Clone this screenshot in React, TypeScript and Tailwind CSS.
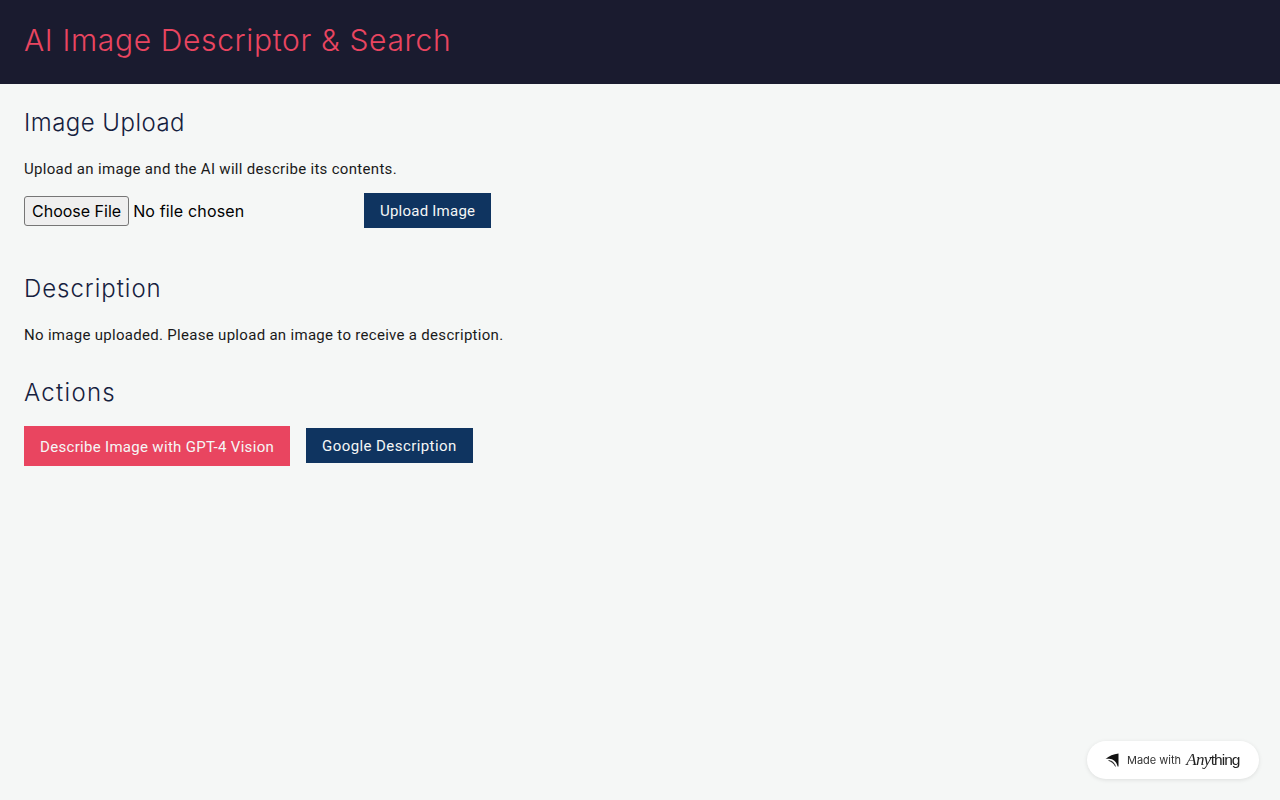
export default function App() {
  return (
    <div className="min-h-screen bg-[#f5f7f6] font-['Inter',sans-serif]">
      <header className="bg-[#1a1b2f] p-6">
        <h1 className="h-9 font-['Inter',sans-serif] text-3xl leading-[32px] font-light tracking-[0.65px] text-[#e94560]">AI Image Descriptor &amp; Search</h1>
      </header>
      <main className="p-6">
        <section className="mb-[46px]">
          <h2 className="mb-4 h-8 font-['Inter',sans-serif] text-2xl leading-[30px] font-light tracking-[0.47px] text-[#16213e]">Image Upload</h2>
          <p className="h-6 font-['Roboto',sans-serif] text-[15px] leading-[26px] tracking-[0.31px] text-[#1a1a1a]">Upload an image and the AI will describe its contents.</p>
          <div className="mt-[13px] flex items-center">
            <input type="file" className="mr-4 w-[324px] font-['Inter',sans-serif] text-base tracking-[0.15px] text-black file:mr-1 file:h-[30px] file:rounded-[3px] file:border file:border-solid file:border-[#767676] file:bg-[#efefef] file:px-[7px] file:text-base file:tracking-normal file:text-black" />
            <button className="h-[35px] bg-[#0f3460] px-4 pt-px font-['Roboto',sans-serif] text-[15px] tracking-[0.23px] text-[#f5f7f6]">Upload Image</button>
          </div>
        </section>
        <section className="mb-[30px]">
          <h2 className="mb-4 h-8 font-['Inter',sans-serif] text-2xl leading-[30px] font-light tracking-[0.97px] text-[#16213e]">Description</h2>
          <p className="h-6 font-['Roboto',sans-serif] text-[15px] leading-[26px] tracking-[0.3px] text-[#1a1a1a]">No image uploaded. Please upload an image to receive a description.</p>
        </section>
        <section>
          <h2 className="mb-[16px] h-[34px] font-['Inter',sans-serif] text-2xl leading-[34px] font-light tracking-[1.3px] text-[#16213e]">Actions</h2>
          <div className="flex items-start gap-4">
            <button className="h-10 bg-[#e94560] px-4 pt-[2px] font-['Roboto',sans-serif] text-[15px] tracking-[0.31px] text-[#f5f7f6]">Describe Image with GPT-4 Vision</button>
            <button className="mt-[2px] h-[35px] bg-[#0f3460] px-4 pt-px font-['Roboto',sans-serif] text-[15px] tracking-[0.42px] text-[#f5f7f6]">Google Description</button>
          </div>
        </section>
      </main>
      <div className="fixed right-[21px] bottom-[21px] flex h-[38px] w-[172px] items-center rounded-full bg-white pl-[18px] shadow-[0_1px_4px_rgba(0,0,0,0.1)]">
        <svg width="14" height="14" viewBox="0 0 14 14" className="mr-2 shrink-0">
          <path d="M0.5 6 C4 3 8.5 1 13.5 0.5 L13.5 13.5 L12.6 13.5 C12 10 9.5 6.5 5.5 6 C3.5 5.6 2 5.6 0.5 6Z" fill="#111" />
          <path d="M3.5 7.5 C6.5 7.5 9.5 9.5 10.5 13.5 C9 10.5 6.5 8.5 3.5 7.5Z" fill="#111" stroke="#111" strokeWidth="0.4" />
        </svg>
        <span className="font-['Inter',sans-serif] text-[11px] text-[#333]">Made with</span>
        <span className="mb-[1px] ml-[5px] font-['Liberation_Serif',serif] text-[17px] leading-none font-light tracking-[-0.6px] text-[#222] italic">Any</span>
        <span className="mb-[1px] font-['Liberation_Sans',sans-serif] text-[15.5px] leading-none font-light tracking-[-1px] text-[#222]">thing</span>
      </div>
    </div>
  );
}
